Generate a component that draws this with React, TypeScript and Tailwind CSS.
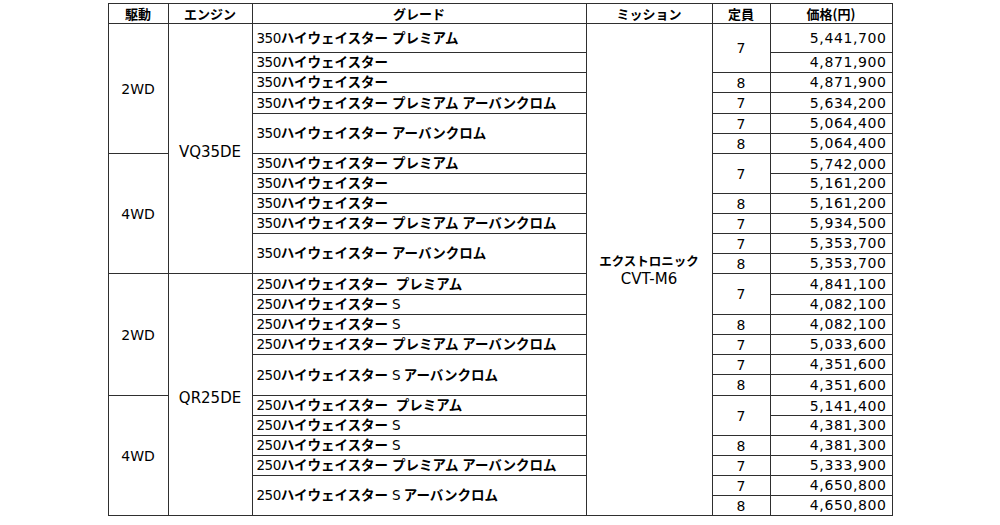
import React from 'react';

// 行の高さ（ピクセル）
const heights = [29, 20, 20, 21, 20, 20, 20, 20, 20, 20, 20, 20, 21, 20, 20, 20, 20, 21, 20, 20, 20, 20, 20, 20];
const hClass: Record<number, string> = { 29: 'h-[29px]', 20: 'h-[20px]', 21: 'h-[21px]' };

const prices = [
  '5,441,700', '4,871,900', '4,871,900', '5,634,200', '5,064,400', '5,064,400',
  '5,742,000', '5,161,200', '5,161,200', '5,934,500', '5,353,700', '5,353,700',
  '4,841,100', '4,082,100', '4,082,100', '5,033,600', '4,351,600', '4,351,600',
  '5,141,400', '4,381,300', '4,381,300', '5,333,900', '4,650,800', '4,650,800',
];

const grades350 = [
  '350ハイウェイスター プレミアム',
  '350ハイウェイスター',
  '350ハイウェイスター',
  '350ハイウェイスター プレミアム アーバンクロム',
  '350ハイウェイスター アーバンクロム',
];
const grades250 = [
  '250ハイウェイスター  プレミアム',
  '250ハイウェイスター S',
  '250ハイウェイスター S',
  '250ハイウェイスター プレミアム アーバンクロム',
  '250ハイウェイスター S アーバンクロム',
];

// 定員（6行ごとに同じ並び）
const seats: (string | null)[] = ['7', null, '8', '7', '7', '8'];
const seatSpan = [2, 0, 1, 1, 1, 1];

const border = 'border border-[#2f2f2f] p-0';
const latin = "font-['DejaVu_Sans',sans-serif]";
const jp = "font-['Noto_Sans_CJK_JP',sans-serif] font-bold";

function Grade({ text }: { text: string }) {
  const parts = text.split(/([\x20-\x7e]+)/).filter(Boolean);
  return (
    <div className="flex items-baseline leading-none whitespace-nowrap">
      {parts.map((p, i) =>
        /^[\x20-\x7e]+$/.test(p) ? (
          <span key={i} className={`${latin} text-[13.5px] tracking-[-0.5px] whitespace-pre`}>{p}</span>
        ) : (
          <span key={i} className={`${jp} text-[13.5px]`}>{p}</span>
        )
      )}
    </div>
  );
}

export default function App() {
  const rows = heights.map((h, i) => {
    const block = Math.floor(i / 6);
    const k = i % 6;
    const grades = block < 2 ? grades350 : grades250;
    // グレードの行 (最後の2行はアーバンクロムで結合)
    const gradeIdx = k < 4 ? k : k === 4 ? 4 : -1;
    const single = k > 0 && k < 4;
    return (
      <tr key={i} className={hClass[h]}>
        {k === 0 && (
          <td rowSpan={6} className={`${border} ${latin} text-[14px] leading-none text-center align-middle`}>
            {block % 2 === 0 ? '2WD' : '4WD'}
          </td>
        )}
        {i % 12 === 0 && (
          <td rowSpan={12} className={`${border} ${latin} text-[15px] leading-none text-center align-middle pt-[8px]`}>
            {block < 2 ? 'VQ35DE' : 'QR25DE'}
          </td>
        )}
        {gradeIdx >= 0 && (
          <td
            rowSpan={gradeIdx === 4 ? 2 : 1}
            className={`${border} pl-[4px] ${single ? 'align-bottom pb-[3px]' : 'align-middle'}`}
          >
            <Grade text={grades[gradeIdx]} />
          </td>
        )}
        {i === 0 && (
          <td rowSpan={24} className={`${border} text-center align-middle`}>
            <div className={`${jp} text-[12.5px] leading-[18px]`}>エクストロニック</div>
            <div className={`${latin} text-[15px] leading-[18px]`}>CVT-M6</div>
          </td>
        )}
        {seats[k] && (
          <td rowSpan={seatSpan[k]} className={`${border} ${latin} text-[14px] leading-none text-center align-middle`}>
            {seats[k]}
          </td>
        )}
        <td
          className={`${border} ${latin} text-[14px] tracking-[0.6px] leading-none text-right pr-[5px] ${
            k === 0 ? 'align-middle' : 'align-bottom pb-[3px]'
          }`}
        >
          {prices[i]}
        </td>
      </tr>
    );
  });

  return (
    <div className="w-[1000px] h-[525px] bg-white text-black overflow-hidden pt-[3px]">
      <table className="mx-auto w-[784px] table-fixed border-collapse">
        <colgroup>
          <col className="w-[60px]" />
          <col className="w-[84px]" />
          <col className="w-[334px]" />
          <col className="w-[126px]" />
          <col className="w-[58px]" />
          <col className="w-[122px]" />
        </colgroup>
        <thead>
          <tr className="h-[20px]">
            {['駆動', 'エンジン', 'グレード', 'ミッション', '定員', '価格(円)'].map((t) => (
              <th key={t} className={`${border} ${jp} text-[13px] leading-none text-center align-middle`}>
                {t}
              </th>
            ))}
          </tr>
        </thead>
        <tbody>{rows}</tbody>
      </table>
    </div>
  );
}
